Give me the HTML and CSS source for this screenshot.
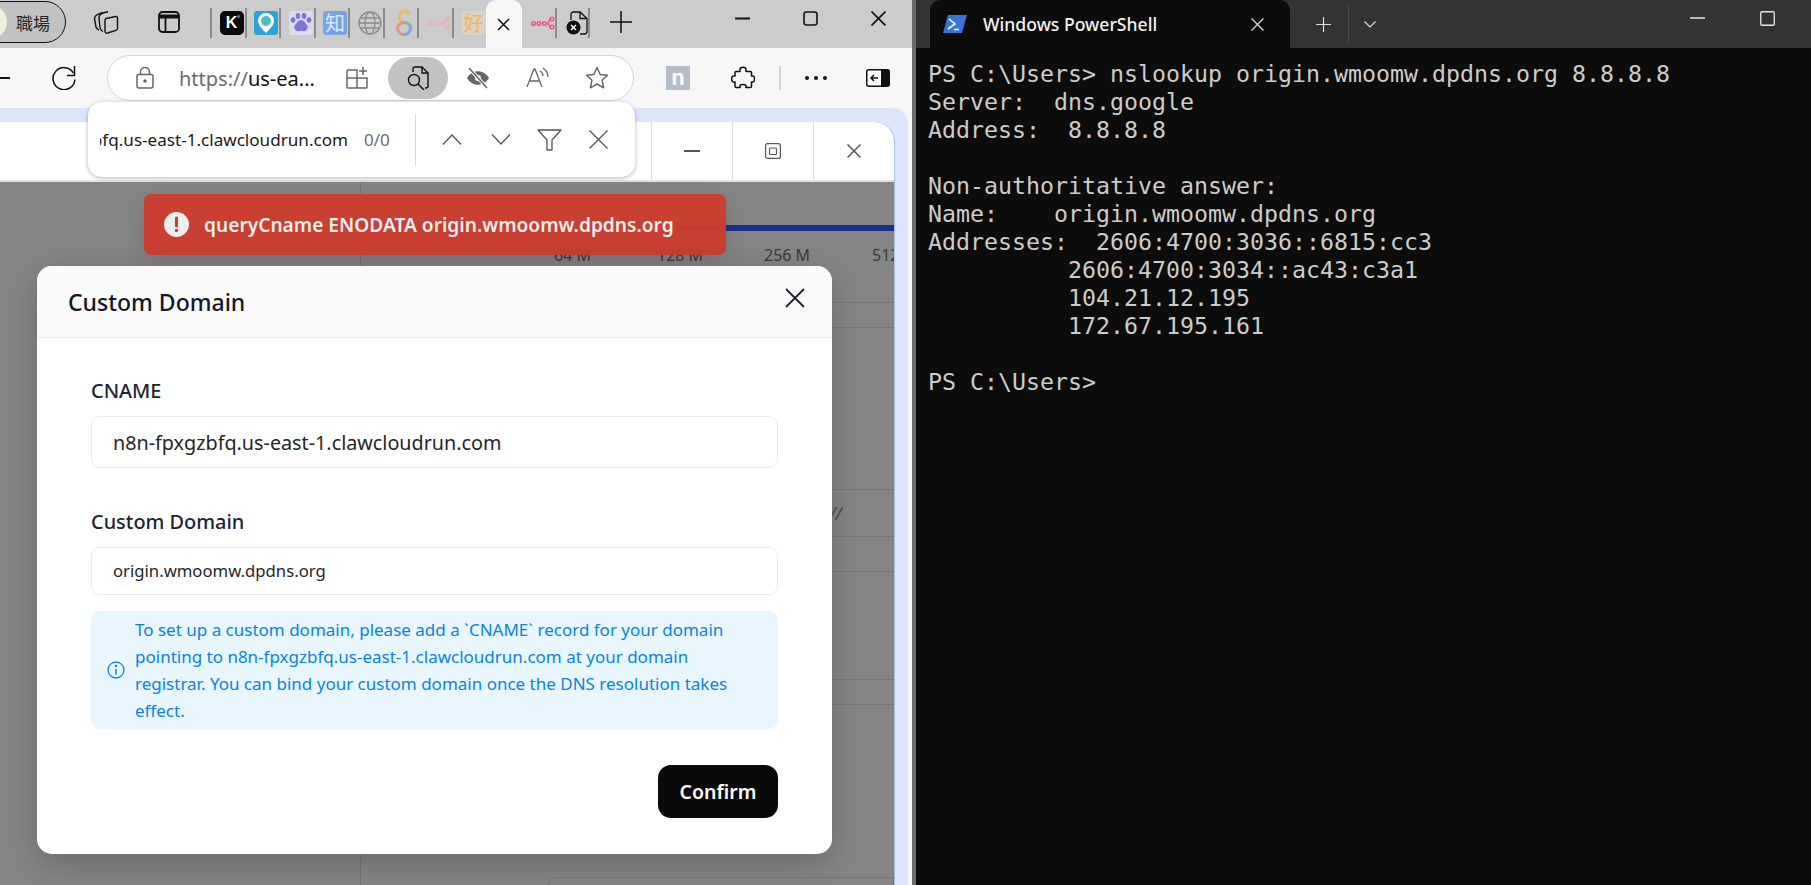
FILE: index.html
```html
<!DOCTYPE html>
<html lang="en">
<head>
<meta charset="utf-8">
<title>Custom Domain</title>
<link rel="stylesheet" href="styles.css">
</head>
<body>
<div class="browser">
  <div class="tabstrip">
    <div class="profile"><span class="avatar"></span><span class="profile-name">職場</span></div>
    <span class="strip-btn collections">
      <svg width="26" height="26" viewBox="0 0 26 26" fill="none" stroke="#111" stroke-width="1.4" stroke-linejoin="round"><path d="M10 3.5 6 4.8C3.5 5.6 1.5 7 1.5 10l1.5 8c.4 1.5 1.5 2.5 3 3"/><path d="M15 2.8 10 4C7.5 4.7 6 6.500 6 9l1 10c.3 1.800 1.200 2.800 3 3.500"/><path d="M13 9.500 22.500 7.500c1.300-.2 2 .5 2 1.700v10.300c0 1-.5 1.500-1.500 1.800L14.500 24c-1.500.4-2.500-.3-2.500-1.800V11.500c0-1 .2-1.700 1-2Z"/></svg>
    </span>
    <span class="strip-btn vtabs">
      <svg width="22" height="22" viewBox="0 0 22 22" fill="none" stroke="#111"><rect x="1" y="1" width="20" height="20" rx="3.500" stroke-width="1.800"/><path d="M1 5.500h20" stroke-width="4"/><path d="M7.500 6v15" stroke-width="1.800"/></svg>
    </span>
    <div class="favs">
      <span class="fav"><span class="tile tile-k">K<i class="dot"></i></span></span>
      <span class="fav"><span class="tile tile-pin"><svg width="16" height="20" viewBox="0 0 16 20"><path d="M8 0a8 8 0 0 1 8 8c0 4.500-5 9-8 12-3-3-8-7.500-8-12a8 8 0 0 1 8-8Z" fill="#fff"/><circle cx="8" cy="8" r="5" fill="#4cbfc0"/></svg></span></span>
      <span class="fav"><span class="tile tile-paw"><svg width="22" height="20" viewBox="0 0 22 20" fill="#7e73dc"><ellipse cx="3" cy="7" rx="2.300" ry="2.800"/><ellipse cx="8" cy="3" rx="2.300" ry="3"/><ellipse cx="14" cy="3" rx="2.300" ry="3"/><ellipse cx="19" cy="7" rx="2.300" ry="2.800"/><path d="M11 7c3 0 4 3 6 5 2 3-1 7-4 6-1.500-.4-2.500-.4-4 0-3 1-6-3-4-6 2-2 3-5 6-5Z"/></svg></span></span>
      <span class="fav"><span class="tile tile-zhi">知</span></span>
      <span class="fav"><svg width="24" height="24" viewBox="0 0 24 24" fill="none" stroke="#8c8c8c" stroke-width="1.300"><circle cx="12" cy="12" r="11"/><ellipse cx="12" cy="12" rx="5" ry="11"/><path d="M1 12h22M2.500 7h19M2.500 17h19"/></svg></span>
      <span class="fav fav-eight"><svg width="18" height="26" viewBox="0 0 18 26" fill="none" stroke-width="3.200"><path d="M14.500 4.500A5.500 5.500 0 0 0 4 7c0 3 2 5 5 5.500" stroke="#e9b872"/><path d="M9 12.500c-4 .5-6.500 3-6.500 6" stroke="#e88f86"/><path d="M2.500 18.500a6.500 6.500 0 0 0 6.500 6" stroke="#e88f86"/><path d="M9 24.500a6.500 6.500 0 0 0 6-9" stroke="#7fa7e8"/><path d="M15 15.500c-1-2-3-3-6-3" stroke="#7fc08a"/></svg></span>
      <span class="fav"><svg width="24" height="14" viewBox="0 0 24 14" fill="none" stroke="#f0a8bd" stroke-width="1.200"><circle cx="2.500" cy="7.500" r="1.800"/><circle cx="8" cy="7.500" r="1.800"/><circle cx="13.500" cy="7.500" r="1.800"/><circle cx="21" cy="3" r="1.800"/><circle cx="21" cy="11" r="1.800"/><path d="M15.300 7.500h1.500c1 0 1-4.500 2.400-4.500M16.800 7.500c1 0 1 3.500 2.400 3.500"/></svg></span>
      <span class="fav fav-last"><span class="tile tile-hao">好</span></span>
    </div>
    <div class="tab-active">
      <svg width="13" height="13" viewBox="0 0 13 13" stroke="#111" stroke-width="1.500"><path d="M1 1l11 11M12 1 1 12"/></svg>
    </div>
    <span class="fav-end pink">
      <svg width="24" height="14" viewBox="0 0 24 14" fill="none" stroke="#ec5a84" stroke-width="1.500"><circle cx="2.500" cy="7.500" r="1.800"/><circle cx="8" cy="7.500" r="1.800"/><circle cx="13.500" cy="7.500" r="1.800"/><circle cx="21" cy="3" r="1.800"/><circle cx="21" cy="11" r="1.800"/><path d="M15.300 7.500h1.500c1 0 1-4.500 2.400-4.500M16.800 7.500c1 0 1 3.500 2.400 3.500"/></svg>
    </span>
    <span class="fav-end docx">
      <svg width="22" height="24" viewBox="0 0 22 24" fill="none"><path d="M5 9V3.500C5 2 6 1 7.500 1H14l7 6.500V20c0 1.500-1 3-2.500 3H14" stroke="#111" stroke-width="1.300"/><path d="M14 1v6.500h7" stroke="#111" stroke-width="1.300"/><circle cx="7.500" cy="16.500" r="7" fill="#111"/><path d="M5 14l5 5M10 14l-5 5" stroke="#fff" stroke-width="1.500"/></svg>
    </span>
    <span class="newtab"><svg width="22" height="22" viewBox="0 0 22 22" stroke="#111" stroke-width="1.500"><path d="M0 11h22M11 0v22"/></svg></span>
    <div class="winctl">
      <span class="winbtn"><svg width="15" height="3" viewBox="0 0 15 3"><path d="M0 1.500h15" stroke="#111" stroke-width="2"/></svg></span>
      <span class="winbtn"><svg width="15" height="15" viewBox="0 0 15 15" fill="none"><rect x="1" y="1" width="13" height="13" rx="2.500" stroke="#111" stroke-width="1.600"/></svg></span>
      <span class="winbtn"><svg width="15" height="15" viewBox="0 0 15 15"><path d="M.5.5l14 14M14.500.5l-14 14" stroke="#111" stroke-width="1.600"/></svg></span>
    </div>
  </div>

  <div class="toolbar">
    <span class="back"></span>
    <span class="reload"><svg width="24" height="24" viewBox="0 0 24 24" fill="none" stroke="#111" stroke-width="1.500"><path d="M21.500 7A11 11 0 1 0 23 13.500"/><path d="M22.500 0v9.500H15"/></svg></span>
    <div class="addr">
      <span class="addr-lock"><svg width="18" height="22" viewBox="0 0 18 22" fill="none" stroke="#666" stroke-width="1.500"><rect x="1" y="7.500" width="16" height="13.500" rx="2"/><path d="M4.500 7.500V5a4.500 4.500 0 0 1 9 0v2.500"/><circle cx="9" cy="14" r="1" fill="#666"/></svg></span>
      <span class="addr-url"><span class="addr-scheme">https://</span>us-ea...</span>
      <span class="addr-icon grid"><svg width="22" height="22" viewBox="0 0 22 22" fill="none" stroke="#666" stroke-width="1.500"><path d="M11 3H2a1 1 0 0 0-1 1v16a1 1 0 0 0 1 1h18a1 1 0 0 0 1-1v-9H11V3ZM1 11h10v10"/><path d="M17 0v8M13 4h8"/></svg></span>
      <span class="addr-active"><svg width="22" height="24" viewBox="0 0 22 24" fill="none" stroke="#111" stroke-width="1.400"><path d="M6 6V3a2 2 0 0 1 2-2h7l6 6v13a2 2 0 0 1-2 2h-1"/><path d="M15 1v6h6"/><circle cx="7" cy="14" r="5.500"/><path d="M11 18l6 6"/></svg></span>
      <span class="addr-icon eye"><svg width="24" height="22" viewBox="0 0 24 22" fill="#666"><path d="M1 11c5-9 17-9 22 0-5 9-17 9-22 0Z"/><circle cx="12" cy="11" r="3" fill="#f7f7f7"/><path d="M3 1l18 20" stroke="#f7f7f7" stroke-width="3.500"/><path d="M3 1l18 20" stroke="#666" stroke-width="1.500"/></svg></span>
      <span class="addr-icon read"><svg width="24" height="24" viewBox="0 0 24 24" fill="none" stroke="#666" stroke-width="1.300"><path d="M1 21 8 3h1l7 18M3.500 15h10.500"/><path d="M14 5c2 1 3 3 3 5M17 2c3 2 5 5 5 9"/></svg></span>
      <span class="addr-icon star"><svg width="24" height="24" viewBox="0 0 24 24" fill="none" stroke="#666" stroke-width="1.500" stroke-linejoin="round"><path d="m12 1.500 3.200 7 7.300.8-5.400 5 1.500 7.500-6.600-3.800-6.600 3.800 1.500-7.500-5.400-5 7.300-.8Z"/></svg></span>
    </div>
    <span class="ext-n">n</span>
    <span class="tool puzzle"><svg width="24" height="24" viewBox="0 0 24 24" fill="none" stroke="#111" stroke-width="1.500" stroke-linejoin="round"><path d="M9 3.500c0-3 6-3 6 0 0 1-.2 1.500 0 2h4.500c.8 0 1 .3 1 1V10c.5.300 1 0 1.500 0 2 0 2 6 0 6-.5 0-1-.3-1.500 0v4.500c0 .8-.3 1-1 1H15c-.3-.5 0-1 0-1.500 0-2-6-2-6 0 0 .5.300 1 0 1.500H5c-1 0-1-.5-1-1v-4.500c-.5-.3-1 0-1.500 0-2.500 0-2.500-6 0-6 .5 0 1 .3 1.500 0V6.500c0-.7.300-1 1-1h4c.2-.5 0-1 0-2Z"/></svg></span>
    <span class="tool-sep"></span>
    <span class="tool dots"><i></i><i></i><i></i></span>
    <span class="tool side"><svg width="24" height="18" viewBox="0 0 24 18"><rect x=".75" y=".75" width="22.500" height="16.500" rx="2" fill="#fff" stroke="#111" stroke-width="1.500"/><path d="M15 1h7a1 1 0 0 1 1 1v14a1 1 0 0 1-1 1h-7Z" fill="#111"/><path d="M12 9H5m3-3L5 9l3 3" fill="none" stroke="#111" stroke-width="1.500"/></svg></span>
  </div>

  <div class="viewport">
    <div class="frame">
      <div class="page">
        <div class="page-top">
          <span class="page-btn"><svg width="16" height="2" viewBox="0 0 16 2"><path d="M0 1h16" stroke="#555" stroke-width="2"/></svg></span>
          <span class="page-btn"><svg width="16" height="16" viewBox="0 0 16 16" fill="none" stroke="#555" stroke-width="1.200"><rect x=".6" y=".6" width="14.800" height="14.800" rx="2"/><rect x="4.500" y="5" width="7" height="6.500" rx="1"/></svg></span>
          <span class="page-btn"><svg width="14" height="14" viewBox="0 0 14 14"><path d="M.5.5l13 13M13.500.5l-13 13" stroke="#555" stroke-width="1.500"/></svg></span>
        </div>
        <div class="dim">
          <div class="dim-side"></div>
          <div class="dim-main">
            <div class="row row-chart">
              <div class="chart-line"><span class="chart-name">Memory</span><span class="chart-bar"></span></div>
              <div class="chart-scale"><span>64 M</span><span>128 M</span><span>256 M</span><span>512 M</span></div>
            </div>
            <div class="row row-a"></div>
            <div class="row row-b"></div>
            <div class="row row-c"><span class="slashes">//</span></div>
            <div class="row row-d"></div>
            <div class="row row-e"></div>
            <div class="row row-f"></div>
            <div class="row row-g"></div>
            <div class="dim-box"></div>
          </div>
        </div>
      </div>
    </div>
  </div>

  <div class="findbar">
    <div class="find-text"><span>n8n-fpxgzbfq.us-east-1.clawcloudrun.com</span></div>
    <span class="find-count">0/0</span>
    <span class="find-sep"></span>
    <span class="find-btn find-first"><svg width="20" height="11" viewBox="0 0 20 11" fill="none" stroke="#555" stroke-width="1.300"><path d="M1 10.500 10 1l9 9.500"/></svg></span>
    <span class="find-btn"><svg width="20" height="11" viewBox="0 0 20 11" fill="none" stroke="#555" stroke-width="1.300"><path d="M1 .5 10 10l9-9.500"/></svg></span>
    <span class="find-btn"><svg width="25" height="22" viewBox="0 0 25 22" fill="none" stroke="#555" stroke-width="1.300" stroke-linejoin="round"><path d="M1 1h23l-9 10v10h-5V11Z"/></svg></span>
    <span class="find-btn"><svg width="19" height="19" viewBox="0 0 19 19"><path d="M.5.5l18 18M18.500.5l-18 18" stroke="#555" stroke-width="1.300"/></svg></span>
  </div>

  <div class="toast">
    <svg class="toast-icon" width="25" height="25" viewBox="0 0 25 25"><circle cx="12.500" cy="12.500" r="12.500" fill="#eeeeee"/><path d="M12.500 6v8" stroke="#cb3c30" stroke-width="3" stroke-linecap="round"/><circle cx="12.500" cy="18.500" r="1.700" fill="#cb3c30"/></svg>
    <span class="toast-text">queryCname ENODATA origin.wmoomw.dpdns.org</span>
  </div>

  <div class="modal">
    <div class="modal-head">
      <span class="modal-title">Custom Domain</span>
      <svg class="modal-close" width="20" height="20" viewBox="0 0 20 20"><path d="M1 1l18 18M19 1 1 19" stroke="#1c2230" stroke-width="1.800"/></svg>
    </div>
    <div class="modal-body">
      <div class="label label-first">CNAME</div>
      <div class="input input-lg">n8n-fpxgzbfq.us-east-1.clawcloudrun.com</div>
      <div class="label label-second">Custom Domain</div>
      <div class="input input-sm">origin.wmoomw.dpdns.org</div>
      <div class="alert">
        <svg class="alert-icon" width="18" height="18" viewBox="0 0 18 18" fill="none" stroke="#0884dd" stroke-width="1.300"><circle cx="9" cy="9" r="8"/><path d="M9 8v5.500" stroke-width="1.500"/><circle cx="9" cy="5" r=".6" fill="#0884dd"/></svg>
        <span class="alert-text">To set up a custom domain, please add a `CNAME` record for your domain pointing to n8n-fpxgzbfq.us-east-1.clawcloudrun.com at your domain registrar. You can bind your custom domain once the DNS resolution takes effect.</span>
      </div>
      <div class="modal-foot"><span class="confirm">Confirm</span></div>
    </div>
  </div>
</div>

<div class="divider"></div>

<div class="terminal">
  <div class="term-bar">
    <div class="term-tab">
      <svg class="term-logo" width="24" height="18" viewBox="0 0 24 18"><path d="M5 0h19l-5 18H0Z" fill="#3a74d8"/><path d="M6 4l6 5-7 5" fill="none" stroke="#fff" stroke-width="1.600"/><path d="M11 14.500h5" stroke="#fff" stroke-width="1.500"/></svg>
      <span class="term-title">Windows PowerShell</span>
      <svg class="term-x" width="13" height="13" viewBox="0 0 13 13"><path d="M.5.500l12 12M12.500.500l-12 12" stroke="#ddd" stroke-width="1.200"/></svg>
    </div>
    <span class="term-plus"><svg width="15" height="15" viewBox="0 0 15 15"><path d="M0 7.500h15M7.500 0v15" stroke="#ddd" stroke-width="1.200"/></svg></span>
    <span class="term-sep"></span>
    <span class="term-chev"><svg width="12" height="7" viewBox="0 0 12 7" fill="none"><path d="M.5.500 6 6l5.500-5.500" stroke="#ddd" stroke-width="1.200"/></svg></span>
    <div class="term-win">
      <svg width="15" height="2" viewBox="0 0 15 2"><path d="M0 1h15" stroke="#e6e6e6" stroke-width="1.500"/></svg>
      <svg width="15" height="15" viewBox="0 0 15 15" fill="none"><rect x=".75" y=".75" width="13.500" height="13.500" rx="1" stroke="#e6e6e6" stroke-width="1.300"/></svg>
    </div>
  </div>
  <pre class="term-out">PS C:\Users&gt; nslookup origin.wmoomw.dpdns.org 8.8.8.8
Server:  dns.google
Address:  8.8.8.8

Non-authoritative answer:
Name:    origin.wmoomw.dpdns.org
Addresses:  2606:4700:3036::6815:cc3
          2606:4700:3034::ac43:c3a1
          104.21.12.195
          172.67.195.161

PS C:\Users&gt;</pre>
</div>
</body>
</html>
```

FILE: styles.css
```css
* { box-sizing: border-box; }
html, body { margin: 0; height: 100%; }
body {
  display: flex;
  width: 1811px;
  height: 885px;
  overflow: hidden;
  background: #0c0c0c;
  font-family: "Noto Sans", "Noto Sans CJK SC", sans-serif;
}

/* Browser window */
.browser {
  position: relative;
  width: 912px;
  height: 885px;
  flex: none;
  display: flex;
  flex-direction: column;
  background: #f7f7f7;
  overflow: hidden;
}
.tabstrip {
  height: 48px;
  flex: none;
  display: flex;
  align-items: center;
  background: #cccccc;
}
.profile {
  width: 96px;
  height: 42px;
  margin-left: -30px;
  margin-top: -4px;
  flex: none;
  display: flex;
  align-items: center;
  border: 1.500px solid #111;
  border-radius: 21px;
  background: #c2c2c2;
}
.avatar { width: 34px; height: 34px; margin-left: 2px; border-radius: 50%; background: #eef0dc; flex: none; }
.profile-name { margin-left: 9px; font-size: 17px; color: #222; font-family: "Noto Sans CJK TC", sans-serif; }
.strip-btn { display: flex; flex: none; margin-top: -4px; }
.collections { margin-left: 27px; }
.vtabs { margin-left: 39px; }
.favs { display: flex; margin-left: 30px; flex: none; border-left: 2px solid #8c8c8c; height: 30px; margin-top: -3px; }
.fav {
  width: 34.500px;
  height: 30px;
  flex: none;
  display: flex;
  align-items: center;
  justify-content: flex-end;
  padding-right: 1px;
  border-right: 2px solid #8c8c8c;
}
.fav-eight { padding-right: 4px; }
.fav-last { width: 32px; padding-right: 0; border-right: 0; }
.tile {
  width: 24px;
  height: 24px;
  display: flex;
  align-items: center;
  justify-content: center;
  border-radius: 3px;
  font-size: 20px;
  line-height: 1;
  font-family: "Noto Sans CJK SC", sans-serif;
}
.tile-k { position: relative; background: #0a0a0a; color: #fff; font: 700 16px "Liberation Sans", sans-serif; border-radius: 5px; }
.dot { position: absolute; top: 4px; right: 4px; width: 3px; height: 3px; border-radius: 50%; background: #2a7de8; }
.tile-pin { background: #2aa3d6; }
.tile-paw { background: #dcdcec; }
.tile-zhi { background: #78a3e4; color: #dfe9fa; }
.tile-hao { background: #dcd3c2; color: #e9b56e; }
.tab-active {
  width: 36px;
  height: 48px;
  flex: none;
  display: flex;
  align-items: center;
  justify-content: center;
  background: #f7f7f7;
  border-radius: 10px 10px 0 0;
}
.fav-end {
  height: 30px;
  flex: none;
  display: flex;
  align-items: center;
  justify-content: flex-end;
  margin-top: -3px;
  border-right: 2px solid #8c8c8c;
}
.pink { width: 35px; }
.docx { width: 33px; }
.newtab { display: flex; margin-left: 20px; margin-top: -4px; flex: none; }
.winctl { display: flex; margin-left: auto; align-self: flex-start; }
.winbtn { width: 68px; height: 36px; display: flex; align-items: center; justify-content: center; }

.toolbar {
  height: 60px;
  flex: none;
  display: flex;
  align-items: center;
  background: #f7f7f7;
}
.back { width: 10px; height: 1.500px; background: #111; flex: none; }
.reload { display: flex; margin-left: 42px; flex: none; }
.addr {
  width: 527px;
  height: 46px;
  margin-left: 31px;
  flex: none;
  display: flex;
  align-items: center;
  background: #fff;
  border: 1.500px solid #d4d4d4;
  border-radius: 23px;
}
.addr-lock { display: flex; margin-left: 28px; flex: none; }
.addr-url { margin-left: 25px; width: 147px; font-size: 20px; color: #111; white-space: nowrap; flex: none; }
.addr-scheme { color: #6b6b6b; }
.addr-icon { display: flex; flex: none; }
.grid { margin-left: 20px; }
.addr-active {
  width: 60px;
  height: 42px;
  margin-left: 20px;
  flex: none;
  display: flex;
  align-items: center;
  justify-content: center;
  border-radius: 21px;
  background: #c2c2c2;
}
.eye { margin-left: 18px; }
.read { margin-left: 36px; }
.star { margin-left: 35px; }
.ext-n {
  width: 24px;
  height: 24px;
  margin-left: 32px;
  flex: none;
  display: flex;
  align-items: center;
  justify-content: center;
  background: #b5bdcb;
  color: #fff;
  font: 700 22px/1 "Liberation Sans", sans-serif;
}
.tool { display: flex; flex: none; align-items: center; }
.puzzle { margin-left: 41px; }
.tool-sep { width: 2px; height: 24px; margin-left: 24px; background: #d4d4d4; flex: none; }
.dots { margin-left: 24px; gap: 5px; }
.dots i { width: 4px; height: 4px; border-radius: 50%; background: #111; display: block; }
.side { margin-left: 39px; }

.viewport { flex: 1; min-height: 0; padding-right: 4px; display: flex; background: #f7f7f7; }
.frame {
  flex: 1;
  display: flex;
  padding: 14px 14px 0 0;
  background: #dde5fb;
  border-top-right-radius: 16px;
  min-width: 0;
}
.page {
  flex: 1;
  display: flex;
  flex-direction: column;
  background: #fff;
  border-top-right-radius: 20px;
  box-shadow: 1px 0 0 #a9bfe8;
  overflow: hidden;
  min-width: 0;
}
.page-top { height: 60px; flex: none; display: flex; justify-content: flex-end; border-bottom: 2px solid #e2e2e2; }
.page-btn {
  width: 81px;
  display: flex;
  align-items: center;
  justify-content: center;
  border-left: 1px solid #e0e0e0;
}
.dim { flex: 1; display: flex; min-height: 0; background: #858585; }
.dim-side { width: 361px; flex: none; border-right: 1px solid #767676; }
.dim-main { flex: 1; min-width: 0; display: flex; flex-direction: column; overflow: hidden; }
.row { flex: none; border-bottom: 1px solid #767676; }
.row-chart { height: 121px; padding-top: 34px; }
.chart-line { display: flex; align-items: center; height: 24px; }
.chart-name { width: 313px; padding-left: 38px; flex: none; font-size: 20px; color: #5c5c5c; }
.chart-bar { flex: 1; height: 6px; background: #1c2f8c; }
.chart-scale { display: flex; margin-top: 5px; padding-left: 193px; font-size: 16px; line-height: 20px; color: #3a3a3a; white-space: nowrap; }
.chart-scale span { flex: none; width: 108px; }
.chart-scale span:first-child { width: 103px; }
.chart-scale span:nth-child(2) { width: 107px; }
.row-a { height: 25px; }
.row-b { height: 162px; }
.row-c { height: 47px; display: flex; justify-content: flex-end; padding: 12px 52px 0 0; font-size: 18px; font-style: italic; color: #4e4e4e; line-height: 22px; }
.row-d { height: 35px; }
.row-e { height: 108px; }
.row-f { height: 25px; border-bottom: 1px solid #767676; }
.row-g { height: 172px; border-bottom: 0; }
.dim-box { height: 40px; margin-left: 187px; border: 1px solid #767676; border-radius: 8px 0 0 0; flex: none; }

/* Find bar */
.findbar {
  position: absolute;
  left: 88px;
  top: 102px;
  width: 547px;
  height: 75px;
  display: flex;
  align-items: center;
  background: #fff;
  border-radius: 14px;
  box-shadow: 0 1px 4px rgba(0, 0, 0, .3);
}
.find-text { width: 248px; margin-left: 12px; display: flex; justify-content: flex-end; overflow: hidden; flex: none; font-size: 17.100px; color: #1a1a1a; white-space: nowrap; }
.find-text span { flex: none; }
.find-count { margin-left: 16px; width: 26px; font-size: 17px; color: #6b6b6b; flex: none; }
.find-sep { width: 1px; height: 52px; margin-left: 25px; background: #d8d8d8; flex: none; }
.find-btn { width: 49px; display: flex; justify-content: center; flex: none; }
.find-first { margin-left: 11px; }

/* Toast */
.toast {
  position: absolute;
  left: 144px;
  top: 194px;
  width: 582px;
  height: 61px;
  display: flex;
  align-items: center;
  padding-left: 20px;
  background: rgba(204, 60, 47, .96);
  border-radius: 7px;
  box-shadow: 0 8px 24px rgba(0, 0, 0, .12);
}
.toast-text { margin-left: 15px; font-size: 19.150px; font-weight: 600; color: #eeeeee; white-space: nowrap; }
.toast-icon { flex: none; }

/* Modal */
.modal {
  position: absolute;
  left: 37px;
  top: 266px;
  width: 795px;
  height: 588px;
  display: flex;
  flex-direction: column;
  background: #fff;
  border-radius: 15px;
  overflow: hidden;
  box-shadow: 0 10px 34px rgba(0, 0, 0, .2);
}
.modal-head {
  height: 72px;
  flex: none;
  display: flex;
  align-items: flex-start;
  justify-content: space-between;
  padding: 21px 27px 0 31px;
  background: #fafafa;
  border-bottom: 1px solid #f0f0f0;
}
.modal-title { font-size: 23px; font-weight: 500; line-height: 30px; color: #111827; }
.modal-close { margin-top: 1px; }
.modal-body { flex: 1; padding: 40px 54px 0; display: flex; flex-direction: column; }
.label { font-size: 19.900px; font-weight: 500; line-height: 26px; color: #1c2433; }
.label-second { margin-top: 41px; }
.input {
  display: flex;
  align-items: center;
  margin-top: 12px;
  padding-left: 21px;
  border: 1px solid #e8ebed;
  border-radius: 9px;
  color: #262626;
}
.input-lg { height: 52px; font-size: 19.750px; }
.input-sm { height: 48px; font-size: 16.700px; margin-top: 12px; padding-bottom: 2px; }
.alert {
  margin-top: 16px;
  height: 118px;
  display: flex;
  align-items: center;
  padding-left: 16px;
  background: #e8f6fe;
  border-radius: 9px;
  color: #0884dd;
}
.alert-icon { flex: none; }
.alert-text { width: 612px; flex: none; margin-left: 10px; font-size: 17px; line-height: 27px; }
.modal-foot { display: flex; justify-content: flex-end; margin-top: 36px; }
.confirm {
  width: 120px;
  height: 53px;
  display: flex;
  align-items: center;
  justify-content: center;
  background: #0a0a0a;
  border-radius: 13px;
  color: #fff;
  font-size: 19.500px;
  font-weight: 600;
}

/* Divider */
.divider { width: 4px; flex: none; background: #6b6b6b; }

/* Terminal */
.terminal { flex: 1; min-width: 0; display: flex; flex-direction: column; background: #0c0c0c; }
.term-bar { height: 48px; flex: none; display: flex; align-items: center; background: #333333; }
.term-tab {
  width: 360px;
  height: 48px;
  margin-left: 14px;
  flex: none;
  display: flex;
  align-items: center;
  padding-left: 13px;
  background: #0c0c0c;
  border-radius: 10px 10px 0 0;
}
.term-logo { flex: none; }
.term-title { margin-left: 16px; font-size: 17.600px; font-weight: 500; color: #f2f2f2; white-space: nowrap; }
.term-x { margin-left: auto; margin-right: 26px; flex: none; }
.term-plus { display: flex; margin-left: 26px; flex: none; }
.term-sep { width: 1px; height: 36px; margin-left: 17px; background: #4a4a4a; flex: none; }
.term-chev { display: flex; margin-left: 15px; flex: none; }
.term-win { display: flex; align-items: center; gap: 55px; margin-left: 314px; margin-top: -12px; flex: none; }
.term-out {
  margin: 12px 0 0;
  padding-left: 12px;
  font-family: "DejaVu Sans Mono", monospace;
  font-size: 23.250px;
  line-height: 28px;
  color: #cccccc;
}
```
